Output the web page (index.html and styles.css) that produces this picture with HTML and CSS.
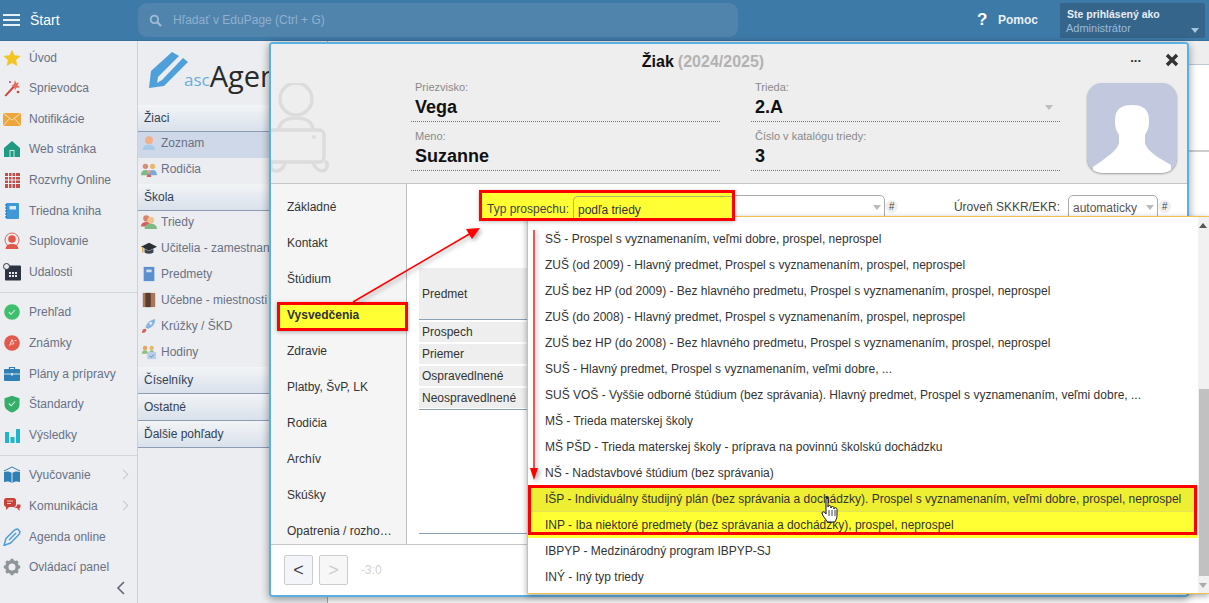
FILE: index.html
```html
<!DOCTYPE html>
<html lang="sk">
<head>
<meta charset="utf-8">
<title>Žiak</title>
<link rel="stylesheet" href="styles.css">
</head>
<body>
<div class="app">
  <header class="topbar">
    <div class="burger"><i></i><i></i><i></i></div>
    <div class="start">Štart</div>
    <div class="search">
      <svg class="search-ico" viewBox="0 0 14 14"><circle cx="5.8" cy="5.8" r="4" fill="none" stroke="#9fbcd4" stroke-width="2"/><path d="M9 9l4 4" stroke="#9fbcd4" stroke-width="2.4"/></svg>
      <span>Hľadať v EduPage (Ctrl + G)</span>
    </div>
    <div class="help"><b class="q">?</b><b class="pomoc">Pomoc</b></div>
    <div class="user">
      <b>Ste prihlásený ako</b>
      <span>Administrátor</span>
      <i class="caret light"></i>
    </div>
  </header>
  <div class="columns">
    <nav class="side">
      <a class="s-item"><svg viewBox="0 0 18 18"><path d="M9 .8l2.5 5.5 6 .7-4.4 4 1.2 6L9 14l-5.300 3 1.200-6-4.400-4 6-.7z" fill="#f2c522"/></svg>Úvod</a>
      <a class="s-item"><svg viewBox="0 0 18 18"><path d="M1.500 16.500L10 7l1.500 1.500L3 17.500z" fill="#d2413a"/><path d="M12 1l1 3 3-.5-1.500 2.500L17 8.500l-3.500.2-1.500 2.500-.8-3L8.500 7l2.500-2z" fill="#e56b5f"/><circle cx="15" cy="13" r="1.300" fill="#d2413a"/><circle cx="7" cy="3" r="1" fill="#d2413a"/></svg>Sprievodca</a>
      <a class="s-item"><svg viewBox="0 0 18 18"><rect y="3" width="18" height="13" fill="#eda63c"/><path d="M0 3l9 7 9-7M0 16l6.500-7.500M18 16l-6.500-7.500" fill="none" stroke="#fbe1b4" stroke-width="1"/></svg>Notifikácie</a>
      <a class="s-item"><svg viewBox="0 0 18 18"><path d="M9 1l8 7v9H1V8z" fill="#1f9a83"/><rect x="6.500" y="10" width="5" height="7" fill="#cfe9e3"/><rect x="7.500" y="11" width="3" height="6" fill="#1f9a83"/></svg>Web stránka</a>
      <a class="s-item"><svg viewBox="0 0 18 18"><rect x="2" y="2" width="15" height="15" fill="#bf4f48"/><path d="M2 5.500h15M2 9h15M2 12.500h15M5.500 2v15M9 2v15M12.500 2v15" stroke="#eceef1" stroke-width="1"/></svg>Rozvrhy Online</a>
      <a class="s-item"><svg viewBox="0 0 18 18"><rect x="3" y="1" width="13" height="16" rx="1" fill="#3f98d8"/><rect x="6.500" y="4" width="6.500" height="3.500" fill="#d9ecf8"/><path d="M2 3h2M2 6h2M2 9h2M2 12h2M2 15h2" stroke="#20638f" stroke-width="1.200"/></svg>Triedna kniha</a>
      <a class="s-item"><svg viewBox="0 0 18 18"><circle cx="9" cy="8" r="7" fill="none" stroke="#e2675b" stroke-width="1"/><circle cx="9" cy="7" r="3.800" fill="#e2574c"/><path d="M2.500 17c.5-4 3-5 6.500-5s6 1 6.500 5z" fill="#e2574c"/></svg>Suplovanie</a>
      <a class="s-item"><svg viewBox="0 0 18 18"><rect x="2" y="2.500" width="16" height="15" rx="1" fill="#2b3440"/><path d="M6 9h2v2H6zm3 0h2v2H9zm3 0h2v2h-2zM6 12h2v2H6zm3 0h2v2H9zm3 0h2v2h-2z" fill="#e8eaee"/><circle cx="3.500" cy="3.500" r="3" fill="#e8eaee" stroke="#2b3440"/></svg>Udalosti</a>
      <hr class="s-div">
      <a class="s-item"><svg viewBox="0 0 18 18"><circle cx="9" cy="9" r="7.800" fill="#3ebf6e"/><path d="M5.800 9l2.200 2.300 4-4.300" fill="none" stroke="#d8f3e2" stroke-width="1.100"/></svg>Prehľad</a>
      <a class="s-item"><svg viewBox="0 0 18 18"><circle cx="9" cy="9" r="7.800" fill="#e25a4b"/><path d="M6.500 12L9 5.500 11 10M7.500 10h3M11.500 6.500h2" fill="none" stroke="#f9d6d1" stroke-width="1"/></svg>Známky</a>
      <a class="s-item"><svg viewBox="0 0 18 18"><rect x="1" y="4" width="16" height="12" rx="1" fill="#2f7fb4"/><path d="M1 9h16" stroke="#cfe2ef"/><path d="M6.500 4V2.500h5V4" fill="none" stroke="#2f7fb4" stroke-width="1.200"/><rect x="8" y="8" width="2" height="2.500" fill="#cfe2ef"/></svg>Plány a prípravy</a>
      <a class="s-item"><svg viewBox="0 0 18 18"><path d="M9 .8l7.500 2.400v6.300c0 4-3.200 6.500-7.500 8-4.300-1.500-7.500-4-7.500-8V3.200z" fill="#36ad68"/><path d="M5.800 8.500l2.300 2.300 4-4.300" fill="none" stroke="#d8f3e2" stroke-width="1.100"/></svg>Štandardy</a>
      <a class="s-item"><svg viewBox="0 0 18 18"><path d="M2 6h4v11H2zm5.500 5h4v6h-4zM13 3h4v14h-4z" fill="#21b5cd"/></svg>Výsledky</a>
      <hr class="s-div">
      <a class="s-item"><svg viewBox="0 0 18 18"><path d="M1 6c3-1 6-.5 8 1 2-1.500 5-2 8-1v10c-3-1-6-.5-8 1-2-1.500-5-2-8-1z" fill="#2f7fb4"/><path d="M9 7v10" stroke="#d6e6f1"/><path d="M1 5l8-4 8 4" fill="none" stroke="#2f7fb4"/></svg>Vyučovanie<em class="chev"></em></a>
      <a class="s-item"><svg viewBox="0 0 18 18"><path d="M1 3.500C1 2 2 1 3.500 1h7C12 1 13 2 13 3.500v4C13 9 12 10 10.500 10H6l-3 3v-3.100C1.800 9.600 1 8.700 1 7.500z" fill="#c8423a"/><path d="M8 11h6l2.500 3v-3c1-.5 1-1 1-2V7.500H14c0 2-1 3.500-6 3.500z" fill="#c8423a"/><path d="M4 4h6M4 6.500h4" stroke="#f0c7c3"/></svg>Komunikácia<em class="chev"></em></a>
      <a class="s-item"><svg viewBox="0 0 18 18"><path d="M1 17.500l2-7L10.500 3c1.500-1.500 3-2 4-2l2.500 2.500c0 1-.5 2.500-2 4L7.500 15z" fill="none" stroke="#4f9fda" stroke-width="1.500"/><path d="M6 12l7-7" stroke="#4f9fda" stroke-width="1.500"/></svg>Agenda online</a>
      <a class="s-item"><svg viewBox="0 0 18 18"><circle cx="9" cy="9" r="5.200" fill="none" stroke="#8d9599" stroke-width="3.400"/><path d="M9 .8v3M9 14.200v3M.8 9h3M14.200 9h3M3.200 3.200l2.100 2.100M12.700 12.700l2.100 2.100M3.200 14.800l2.100-2.100M12.700 5.300l2.100-2.100" stroke="#8d9599" stroke-width="2.800"/></svg>Ovládací panel</a>
      <div class="collapse"><svg viewBox="0 0 10 14" width="10" height="14"><path d="M8 1L2 7l6 6" fill="none" stroke="#667" stroke-width="1.600"/></svg></div>
    </nav>

    <aside class="tree">
      <div class="logo">
        <svg class="logo-pen" viewBox="0 0 40 40"><path d="M0 37L2 20 23 1 30 5 9 26 8 32 13 29 34 7 39 11 15 35z" fill="#4f9fda"/></svg>
        <span class="asc">asc</span><span class="agenda">Agenda</span>
      </div>
      <div class="t-head">Žiaci</div>
      <a class="t-item sel"><svg viewBox="0 0 18 18"><circle cx="9" cy="6" r="4.500" fill="#f0b08c"/><path d="M2 17c0-4 3-6 7-6s7 2 7 6z" fill="#a9cbe8"/></svg>Zoznam</a>
      <a class="t-item"><svg viewBox="0 0 18 18"><circle cx="5" cy="6" r="3" fill="#d98a72"/><circle cx="13" cy="6" r="3" fill="#e6b96e"/><path d="M0 16c0-4 2-6 5-6s4 2 4 6z" fill="#7dba86"/><path d="M8 16c0-4 2-6 5-6s5 2 5 6z" fill="#7fa9d8"/><circle cx="9" cy="12" r="2" fill="#e89a8c"/><path d="M6.500 18c0-2 1-3 2.500-3s2.500 1 2.500 3z" fill="#d9605a"/></svg>Rodičia</a>
      <div class="t-head">Škola</div>
      <a class="t-item"><svg viewBox="0 0 18 18"><circle cx="6" cy="5" r="3.500" fill="#d9826e"/><path d="M0 14c0-3 2-5 6-5s5 2 5 5z" fill="#d9605a"/><circle cx="11" cy="7" r="3.800" fill="#edc590"/><path d="M4 17c0-4 3-6 7-6s7 2 7 6z" fill="#7dba86"/></svg>Triedy</a>
      <a class="t-item"><svg viewBox="0 0 18 18"><path d="M9 3l9 4.500L9 12 0 7.500z" fill="#2a2f36"/><path d="M4 10v4c3 2 7 2 10 0v-4l-5 2.500z" fill="#3b424b"/><path d="M2 8v6" stroke="#d9a53c" stroke-width="1.500"/></svg>Učitelia - zamestnanci</a>
      <a class="t-item"><svg viewBox="0 0 18 18"><rect x="3" y="1" width="12" height="16" fill="#5b8fd0"/><rect x="6" y="4" width="6" height="3" fill="#cfe0f2"/></svg>Predmety</a>
      <a class="t-item"><svg viewBox="0 0 18 18"><rect x="2" y="1" width="14" height="16" fill="#a8765a"/><rect x="5" y="1" width="6" height="16" fill="#5c3b2c"/></svg>Učebne - miestnosti</a>
      <a class="t-item"><svg viewBox="0 0 18 18"><path d="M5 11C6 6 10 2 16 1c0 6-3 9-8 11z" fill="#8cb3e0"/><path d="M1 17c0-3 1-5 4-5l1 1c0 3-2 4-5 4z" fill="#d9605a"/><circle cx="11" cy="6" r="1.500" fill="#e8f0fa"/></svg>Krúžky / ŠKD</a>
      <a class="t-item"><svg viewBox="0 0 18 18"><circle cx="4.500" cy="4.500" r="2.500" fill="#e6a45e"/><circle cx="12" cy="4.500" r="2.500" fill="#e6b96e"/><path d="M1 11c0-2 1-4 3.500-4S8 9 8 11zM9 11c0-2 1-4 3-4s3 2 3 4z" fill="#8cbf7d"/><rect x="7" y="9" width="10" height="8" fill="#b7cfe8"/><path d="M9.500 13l2 2 3-3" fill="none" stroke="#4d7fb8"/></svg>Hodiny</a>
      <div class="t-head">Číselníky</div>
      <div class="t-head">Ostatné</div>
      <div class="t-head">Ďalšie pohľady</div>
    </aside>

    <main class="main"><div class="main-head"></div><div class="main-mid"></div></main>
  </div>

  <section class="modal">
    <div class="m-head">
      <div class="m-title"><b>Žiak</b> <b class="year">(2024/2025)</b>
        <span class="m-dots">...</span>
        <svg class="m-close" viewBox="0 0 14 14"><path d="M2 2l10 10M12 2L2 12" stroke="#333" stroke-width="3.400"/></svg>
      </div>
      <div class="m-grid">
        <svg class="avatar" viewBox="0 0 60 92"><g fill="none" stroke="#dcdcdc" stroke-width="3.500"><circle cx="25" cy="16" r="16"/><path d="M8 48c0-9 7-13 17-13s17 4 17 13"/><rect x="-3" y="47" width="56" height="32" rx="5"/><path d="M2 78c-4 2-3 10 3 10 6 0 9-6 9-9M42 79c0 2 4 9 9 9s7-7 3-10"/></g><circle cx="43" cy="54" r="2" fill="#dcdcdc"/></svg>
        <div class="m-cols">
          <div class="field"><label>Priezvisko:</label><div class="val">Vega</div></div>
          <div class="field"><label>Trieda:</label><div class="val">2.A<i class="caret"></i></div></div>
          <div class="field"><label>Meno:</label><div class="val">Suzanne</div></div>
          <div class="field"><label>Číslo v katalógu triedy:</label><div class="val">3</div></div>
        </div>
        <div class="photo">
          <svg viewBox="0 0 90 90"><path d="M28 38C28 26 34 22 45 22S62 26 62 38C62 46 60 48 58 52L58 60C60 68 70 74 84 82V90H6V84C20 74 30 68 32 60L32 52C30 48 28 46 28 38Z" fill="#fff"/></svg>
        </div>
      </div>
    </div>
    <div class="m-body">
      <div class="tabs">
        <a>Základné</a><a>Kontakt</a><a>Štúdium</a><a>&nbsp;</a><a>Zdravie</a><a>Platby, ŠvP, LK</a><a>Rodičia</a><a>Archív</a><a>Skúšky</a><a>Opatrenia / rozho…</a>
      </div>
      <div class="content">
        <div class="c-row">
          <div class="select wide"><i class="caret"></i></div><span class="hash">#</span>
          <label class="lvl">Úroveň SKKR/EKR:</label>
          <div class="select short"><span>automaticky</span><i class="caret"></i></div><span class="hash">#</span>
        </div>
        <div class="tbl">
          <div class="tbl-head">Predmet</div>
          <div class="tbl-row">Prospech</div>
          <div class="tbl-row">Priemer</div>
          <div class="tbl-row">Ospravedlnené</div>
          <div class="tbl-row">Neospravedlnené</div>
          <div class="tbl-end"></div>
        </div>
      </div>
    </div>
    <div class="m-foot">
      <button class="nav-btn">&lt;</button>
      <button class="nav-btn off">&gt;</button>
      <span class="score">-3:0</span>
    </div>
  </section>

  <div class="drop">
    <div class="drop-list">
      <div class="opt">SŠ - Prospel s vyznamenaním, veľmi dobre, prospel, neprospel</div>
      <div class="opt">ZUŠ (od 2009) - Hlavný predmet, Prospel s vyznamenaním, prospel, neprospel</div>
      <div class="opt">ZUŠ bez HP (od 2009) - Bez hlavného predmetu, Prospel s vyznamenaním, prospel, neprospel</div>
      <div class="opt">ZUŠ (do 2008) - Hlavný predmet, Prospel s vyznamenaním, prospel, neprospel</div>
      <div class="opt">ZUŠ bez HP (do 2008) - Bez hlavného predmetu, Prospel s vyznamenaním, prospel, neprospel</div>
      <div class="opt">SUŠ - Hlavný predmet, Prospel s vyznamenaním, veľmi dobre, ...</div>
      <div class="opt">SUŠ VOŠ - Vyššie odborné štúdium (bez správania). Hlavný predmet, Prospel s vyznamenaním, veľmi dobre, ...</div>
      <div class="opt">MŠ - Trieda materskej školy</div>
      <div class="opt">MŠ PŠD - Trieda materskej školy - príprava na povinnú školskú dochádzku</div>
      <div class="opt">NŠ - Nadstavbové štúdium (bez správania)</div>
      <div class="opt hover">IŠP - Individuálny študijný plán (bez správania a dochádzky). Prospel s vyznamenaním, veľmi dobre, prospel, neprospel</div>
      <div class="opt mark">INP - Iba niektoré predmety (bez správania a dochádzky), prospel, neprospel</div>
      <div class="opt">IBPYP - Medzinárodný program IBPYP-SJ</div>
      <div class="opt">INÝ - Iný typ triedy</div>
    </div>
    <div class="sbar"><i class="up"></i><div class="thumb"></div><i class="down"></i></div>
  </div>

  <div class="note note-typ"><span class="note-lbl">Typ prospechu:</span><span class="note-sel">podľa triedy</span></div>
  <div class="note note-tab">Vysvedčenia</div>
  <div class="note note-opts"></div>

  <svg class="arrows" viewBox="0 0 1209 603" width="1209" height="603">
    <g class="arr">
      <path d="M353 302L472 232.500" stroke="#f00" stroke-width="1.500" fill="none"/>
      <path d="M480 228L466 229 472 239z" fill="#f00"/>
      <path d="M534 230V470" stroke="#e22" stroke-width="1.500" fill="none"/>
      <path d="M534 480L530 468h8z" fill="#f00"/>
    </g>
    <path d="M826 497.500c1.500 0 2 1 2 2v7.500c0-2 3-2 3 0v1c0-2 3-2 3 0v1c0-2 3-1.500 3 .5v6c0 3-1.500 5-2 6.500h-7.500c-1-2-5.500-6.500-5.500-9 0-1.500 2-1.500 3-.5l1 1.500v-14c0-1 .500-2 2-2z" fill="#fff" stroke="#111" stroke-width="1"/>
    <path d="M829 510v6M832 510v6M835 510v6" stroke="#111" stroke-width=".8"/>
  </svg>
</div>
</body>
</html>
```

FILE: styles.css
```css
* { box-sizing: border-box; }
html, body { margin: 0; padding: 0; height: 100%; overflow: hidden; }
body { font-family: "Liberation Sans", Arial, sans-serif; font-size: 12px; color: #333; background: #fff; }
.app { position: relative; width: 1209px; height: 603px; overflow: hidden; display: flex; flex-direction: column; }

.topbar { height: 41px; flex: none; background: #3e7aa8; border-bottom: 1px solid #3a6f99; display: flex; align-items: center; color: #fff; padding-left: 3px; }
.burger { width: 17px; display: flex; flex-direction: column; gap: 3px; }
.burger i { display: block; height: 2px; background: #e8f0f6; }
.start { margin-left: 10px; width: 108px; font-size: 14px; }
.search { width: 600px; height: 34px; background: #5184ad; border-radius: 9px; display: flex; align-items: center; padding-left: 12px; color: #8eb1cd; }
.search-ico { width: 13px; height: 13px; margin-right: 11px; margin-left: -1px; }
.help { display: flex; align-items: center; margin-left: 239px; width: 83px; }
.q { font-size: 17px; width: 21px; text-align: left; }
.pomoc { font-size: 12px; color: #e8f0f6; }
.user { position: relative; width: 145px; height: 35px; background: #35658b; border-radius: 2px; padding: 4px 7px; display: flex; flex-direction: column; font-size: 11px; line-height: 14px; }
.user b { color: #e6eef5; font-size: 10.500px; }
.user span { color: #99bbd8; font-size: 11px; margin-left: -1px; }
.caret { display: inline-block; width: 0; height: 0; border: 4px solid transparent; border-top: 5px solid #bbb; border-bottom: 0; }
.user .caret { position: absolute; right: 6px; top: 25px; }
.caret.light { border-top-color: #a9c4da; }

.columns { flex: 1; display: flex; min-height: 0; }
.side { width: 138px; flex: none; background: #eceef1; border-right: 1px solid #cdd0d4; padding-top: 1.300px; position: relative; }
.s-item { display: flex; align-items: center; height: 30.600px; padding-left: 3px; color: #6a7185; position: relative; }
.s-item svg { width: 18px; height: 18px; margin-right: 8px; flex: none; }
.s-div { border: 0; border-top: 1px solid #d3d5d9; margin: 5px 0 4px; height: 0; }
.chev { position: absolute; right: 10px; top: 11px; width: 7px; height: 7px; border-top: 1px solid #c5c8cc; border-right: 1px solid #c5c8cc; transform: rotate(45deg); }
.collapse { display: flex; justify-content: flex-end; padding: 2px 11px 0 0; margin-top: -3px; }

.tree { width: 190px; flex: none; background: #ebedf0; border-right: 1px solid #aab; }
.logo { height: 64px; position: relative; display: flex; align-items: flex-end; padding: 0 0 15px 46px; white-space: nowrap; overflow: hidden; }
.logo-pen { position: absolute; left: 11px; top: 10px; width: 40px; height: 40px; }
.asc { font-family: "Open Sans", sans-serif; font-size: 17px; line-height: 20px; color: #68aee0; }
.agenda { font-family: "Open Sans", sans-serif; font-size: 29px; line-height: 36px; color: #2a2a2a; margin-bottom: -4px; }
.t-head { height: 27px; display: flex; align-items: center; padding-left: 6px; color: #333f55; font-size: 12px; background: linear-gradient(#f2f4f6, #d9e1eb); border-bottom: 1px solid #8d9cb3; }
.t-item { display: flex; align-items: center; height: 26px; padding: 0 0 4px 3px; color: #6a7185; white-space: nowrap; overflow: hidden; }
.t-item svg { width: 16px; height: 16px; margin-right: 4px; flex: none; }
.t-item.sel { background: #cfd8e8; }

.main { flex: 1; background: #fff; }
.main-head { height: 24px; background: #eeeeee; border-bottom: 1px solid #bcc8d4; }
.main-mid { height: 87px; border-bottom: 2px solid #ccc; background: #fff; }

.modal { position: absolute; left: 269px; top: 42px; width: 920px; height: 555px; background: #fff; border: 2px solid #5bb0e3; border-radius: 4px; display: flex; flex-direction: column; box-shadow: 0 2px 8px rgba(0,0,0,.4); overflow: hidden; }
.m-head { height: 140px; flex: none; background: #eeeeee; border-bottom: 1px solid #c6c6c6; }
.m-title { height: 36px; display: flex; align-items: center; justify-content: center; gap: 4px; font-size: 16px; color: #111; position: relative; padding-right: 52px; }
.year { color: #b3b3b3; }
.m-dots { position: absolute; right: 46px; top: 6px; font-weight: bold; font-size: 13px; color: #333; }
.m-close { position: absolute; right: 8px; top: 9px; width: 14px; height: 14px; }
.m-grid { display: flex; }
.avatar { width: 60px; height: 92px; margin: 3px 80px 0 0; flex: none; display: block; }
.m-cols { width: 649px; display: grid; grid-template-columns: 309px 309px; column-gap: 31px; grid-auto-rows: 49px; }
.field { border-bottom: 1px dotted #777; padding: 0 4px; height: 42px; }
.field label { display: block; font-size: 11px; line-height: 14px; color: #8a8a8a; }
.val { font-size: 18px; line-height: 26px; font-weight: bold; color: #111; display: flex; align-items: center; justify-content: space-between; padding-right: 3px; }
.val .caret { border-top-color: #bdbdbd; }
.photo { width: 90px; height: 90px; margin: 3px 0 0 27px; background: #c2c9de; border-radius: 15px; box-shadow: 0 1px 2px rgba(0,0,0,.35); overflow: hidden; flex: none; }
.photo svg { display: block; width: 90px; height: 90px; }

.m-body { height: 361px; flex: none; display: flex; border-bottom: 1px solid #c6c6c6; }
.tabs { width: 136px; flex: none; background: #f5f5f5; border-right: 1px solid #bdbdbd; padding-top: 5px; }
.tabs a { display: flex; align-items: center; height: 36px; padding-left: 16px; color: #333; white-space: nowrap; }
.content { flex: 1; padding-top: 11px; position: relative; }
.c-row { display: flex; align-items: flex-start; padding-left: 166px; padding-right: 16px; height: 26px; }
.select { height: 26px; border: 1px solid #aaa; border-radius: 5px 5px 0 0; position: relative; padding: 5px 4px; background: #fff; color: #555; }
.select .caret { position: absolute; right: 3px; top: 9px; }
.select.wide { width: 312px; }
.select.short { width: 90px; }
.hash { width: 13px; height: 13px; margin: 5px 0 0 0; border-radius: 50%; background: #f0f0f0; font-size: 10px; line-height: 13px; text-align: center; color: #444; font-style: italic; }
.lvl { margin-left: auto; margin-right: 8px; padding-top: 5px; color: #444; }
.tbl { margin: 47px 0 0 12px; width: 600px; }
.tbl-head { height: 52px; background: #eeeeee; border-bottom: 1px solid #8aa0b5; display: flex; align-items: center; padding: 0 3px; color: #333; }
.tbl-row { height: 20px; margin-top: 2px; background: #eeeeee; padding-left: 3px; line-height: 20px; color: #333; }
.tbl-row:first-of-type { margin-top: 1px; }
.tbl-end { height: 125px; border-top: 1px solid #8aa0b5; border-bottom: 1px solid #8aa0b5; margin-top: 1px; }

.m-foot { flex: 1; display: flex; align-items: center; padding-left: 13px; gap: 6px; background: #fff; }
.nav-btn { width: 29px; height: 30px; border: 1px solid #ccc; background: #f4f5fa; border-radius: 2px; font: 18px "Liberation Sans", sans-serif; color: #444; padding: 0; }
.nav-btn.off { background: #f7f7f7; color: #ccc; }
.score { color: #d2d2d2; margin-left: 7px; }

.drop { position: absolute; left: 527px; top: 216px; width: 682px; height: 378px; background: #fff; border: 1px solid #efc04c; border-right: 0; display: flex; box-shadow: 0 2px 6px rgba(0,0,0,.35); }
.drop-list { flex: 1; padding-top: 9px; }
.opt { height: 26px; line-height: 26px; padding-left: 17px; color: #333; white-space: nowrap; }
.opt.hover { background: #eeee33; border-bottom: 1px solid #e3e35a; }
.opt.mark { background: #ffff33; }
.sbar { width: 11px; flex: none; background: #f1f1f1; position: relative; }
.thumb { position: absolute; left: 1px; right: 0; top: 172px; height: 187px; background: #c1c1c1; }
.sbar .up, .sbar .down { position: absolute; left: 1px; width: 0; height: 0; border: 4px solid transparent; }
.sbar .up { top: 6px; border-top: 0; border-bottom: 5px solid #555; }
.sbar .down { bottom: 5px; border-bottom: 0; border-top: 5px solid #aaa; }

.note { position: absolute; border: 3px solid #f00; }
.note-typ { left: 479px; top: 190px; width: 256px; height: 31px; background: #ffff33; display: flex; align-items: flex-end; color: #444; box-shadow: 0 1px 4px rgba(0,0,0,.25); }
.note-lbl { margin-left: 5px; width: 86px; line-height: 18px; flex: none; }
.note-sel { flex: 1; height: 22px; border: 1px solid #b5b56a; border-bottom: 0; border-right: 0; border-radius: 5px 0 0 0; padding: 4px 0 0 4px; color: #333; line-height: 18px; }
.note-tab { left: 277px; top: 302px; width: 131px; height: 29px; background: #ffff33; color: #333; font-weight: bold; line-height: 21px; padding-left: 7px; box-shadow: 0 1px 4px rgba(0,0,0,.3); }
.note-opts { left: 528px; top: 485px; width: 669px; height: 50px; }

.arrows { position: absolute; left: 0; top: 0; pointer-events: none; }
.arr { filter: drop-shadow(2px 2px 2px rgba(0,0,0,.35)); }
```
